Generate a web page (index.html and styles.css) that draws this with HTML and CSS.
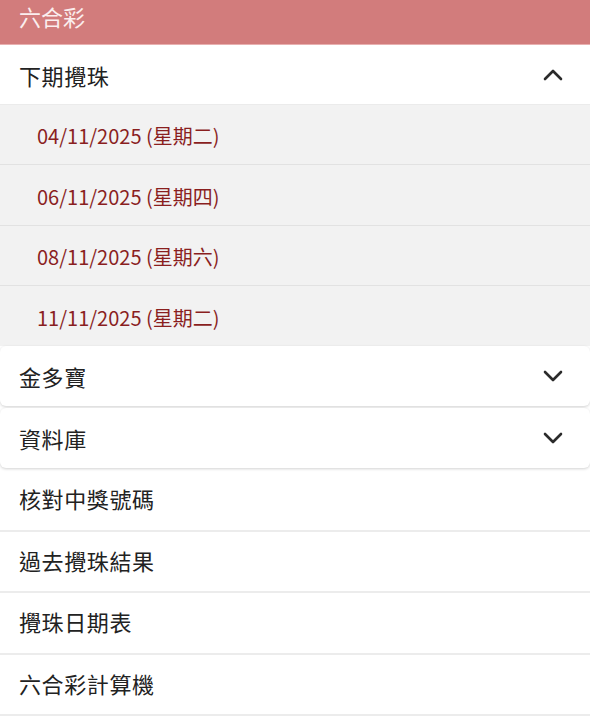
FILE: index.html
```html
<!DOCTYPE html>
<html lang="zh-Hant">
<head>
<meta charset="utf-8">
<title>六合彩</title>
<link rel="stylesheet" href="styles.css">
</head>
<body>
<div class="page">
  <header class="topbar"><span class="topbar-title">六合彩</span></header>

  <section class="panel">
    <div class="row row-head">
      <span class="label">下期攪珠</span>
      <svg class="chev" viewBox="0 0 20 12" width="20" height="12"><path d="M2 10 L10 2 L18 10" fill="none" stroke="#2b2b2b" stroke-width="2.6" stroke-linecap="round" stroke-linejoin="round"/></svg>
    </div>
    <div class="sub">
      <div class="sub-row">04/11/2025 (星期二)</div>
      <div class="sub-row">06/11/2025 (星期四)</div>
      <div class="sub-row">08/11/2025 (星期六)</div>
      <div class="sub-row">11/11/2025 (星期二)</div>
    </div>
  </section>

  <section class="card">
    <div class="row">
      <span class="label">金多寶</span>
      <svg class="chev" viewBox="0 0 20 12" width="20" height="12"><path d="M2 2 L10 10 L18 2" fill="none" stroke="#2b2b2b" stroke-width="2.6" stroke-linecap="round" stroke-linejoin="round"/></svg>
    </div>
  </section>
  <section class="card">
    <div class="row">
      <span class="label">資料庫</span>
      <svg class="chev" viewBox="0 0 20 12" width="20" height="12"><path d="M2 2 L10 10 L18 2" fill="none" stroke="#2b2b2b" stroke-width="2.6" stroke-linecap="round" stroke-linejoin="round"/></svg>
    </div>
  </section>

  <div class="plain"><span class="label">核對中獎號碼</span></div>
  <div class="plain"><span class="label">過去攪珠結果</span></div>
  <div class="plain"><span class="label">攪珠日期表</span></div>
  <div class="plain"><span class="label">六合彩計算機</span></div>
</div>
</body>
</html>
```

FILE: styles.css
```css
* { box-sizing: border-box; }
html, body { margin: 0; padding: 0; background: #ffffff; }
body {
  font-family: "Noto Sans CJK TC", "Noto Sans", sans-serif;
  color: #222222;
}
.page { display: flex; flex-direction: column; width: 590px; }

.topbar {
  height: 45px;
  background: #d27c7c;
  border-bottom: 1px solid #e8b0b0;
  padding: 0 19px;
  display: flex;
  align-items: flex-start;
}
.topbar-title {
  color: #fbeeee;
  font-size: 22px;
  line-height: 32px;
}

.row {
  height: 60px;
  display: flex;
  align-items: center;
  justify-content: space-between;
  padding: 0 27px 0 19px;
}
.label { font-size: 22px; letter-spacing: 0.6px; color: #222222; }
.chev { display: block; }

.row-head { border-bottom: 1px solid #ebebeb; }

.sub { background: #f2f2f2; display: flex; flex-direction: column; }
.sub-row {
  height: 60.4px;
  display: flex;
  align-items: center;
  padding-left: 37px;
  padding-top: 2px;
  color: #8a1f1f;
  font-size: 20px;
  border-bottom: 1px solid #e2e2e2;
}
.sub-row:last-child { border-bottom: none; height: 60px; }

.card {
  background: #fff;
  border-radius: 6px;
  box-shadow: 0 1px 3px rgba(0,0,0,0.18);
  margin-bottom: 2px;
}

.plain {
  height: 61.5px;
  display: flex;
  align-items: center;
  padding-left: 19px;
  padding-bottom: 3px;
  border-bottom: 2px solid #ececec;
}
```
